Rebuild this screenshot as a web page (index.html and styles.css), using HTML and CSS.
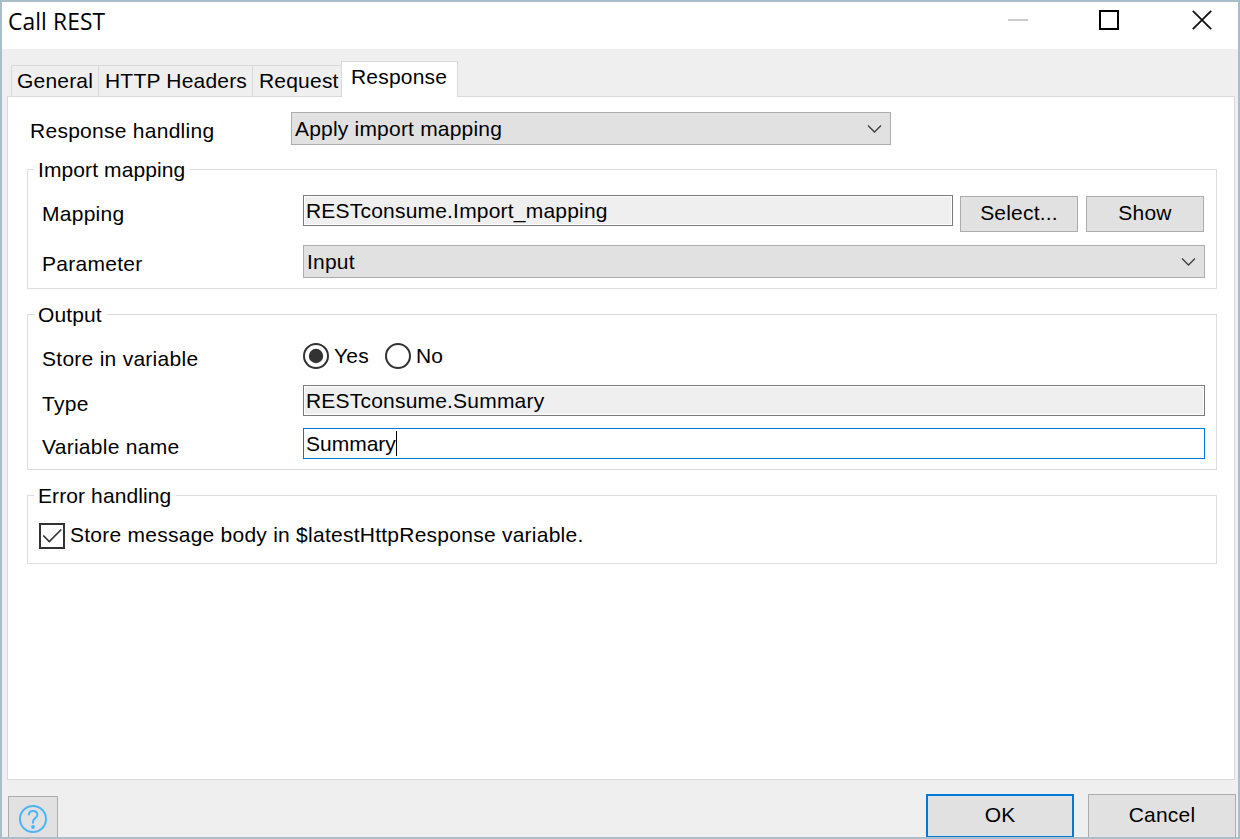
FILE: index.html
```html
<!DOCTYPE html>
<html lang="en">
<head>
<meta charset="utf-8">
<title>Call REST</title>
<link rel="stylesheet" href="styles.css">
</head>
<body>
<div class="window">
  <header class="titlebar">
    <h1 class="title">Call REST</h1>
    <div class="controls">
      <svg class="ctl" width="22" height="22" viewBox="0 0 22 22"><path d="M1 11h20" stroke="#cbcbcb" stroke-width="2"/></svg>
      <svg class="ctl" width="22" height="22" viewBox="0 0 22 22"><rect x="1" y="2" width="18" height="18" fill="none" stroke="#000" stroke-width="2"/></svg>
      <svg class="ctl" width="22" height="22" viewBox="0 0 22 22"><path d="M1.8 1.8L20.2 20.2M20.2 1.8L1.8 20.2" stroke="#111" stroke-width="1.8"/></svg>
    </div>
  </header>

  <nav class="tabs">
    <div class="tab general">General</div>
    <div class="tab headers">HTTP Headers</div>
    <div class="tab request">Request</div>
    <div class="tab active">Response</div>
  </nav>

  <main class="panel">
    <div class="row handling">
      <span class="label">Response handling</span>
      <div class="select short"><span>Apply import mapping</span><svg width="15" height="9" viewBox="0 0 15 9"><path d="M1 1.5l6.5 6.5L14 1.5" fill="none" stroke="#404040" stroke-width="1.4"/></svg></div>
    </div>

    <section class="group import">
      <h2 class="legend">Import mapping</h2>
      <div class="row mapping">
        <span class="label">Mapping</span>
        <div class="input readonly source">RESTconsume.Import_mapping</div>
        <div class="button small">Select...</div>
        <div class="button small">Show</div>
      </div>
      <div class="row parameter">
        <span class="label">Parameter</span>
        <div class="select"><span>Input</span><svg width="15" height="9" viewBox="0 0 15 9"><path d="M1 1.5l6.5 6.5L14 1.5" fill="none" stroke="#404040" stroke-width="1.4"/></svg></div>
      </div>
    </section>

    <section class="group output">
      <h2 class="legend">Output</h2>
      <div class="row store">
        <span class="label">Store in variable</span>
        <div class="radio yes">
          <svg width="26" height="26" viewBox="0 0 26 26"><circle cx="13" cy="13" r="12" fill="#fff" stroke="#333" stroke-width="2"/><circle cx="13" cy="13" r="7.2" fill="#333"/></svg>
          <span>Yes</span>
        </div>
        <div class="radio">
          <svg width="26" height="26" viewBox="0 0 26 26"><circle cx="13" cy="13" r="12" fill="#fff" stroke="#333" stroke-width="2"/></svg>
          <span>No</span>
        </div>
      </div>
      <div class="row type">
        <span class="label">Type</span>
        <div class="input readonly">RESTconsume.Summary</div>
      </div>
      <div class="row variable">
        <span class="label">Variable name</span>
        <div class="input focused">Summary<i class="caret"></i></div>
      </div>
    </section>

    <section class="group errors">
      <h2 class="legend">Error handling</h2>
      <div class="check">
        <svg width="26" height="26" viewBox="0 0 26 26"><rect x="1" y="1" width="24" height="24" fill="#fff" stroke="#333" stroke-width="2"/><path d="M4.3 12.5l6 6L22.3 6.5" fill="none" stroke="#333" stroke-width="1.7"/></svg>
        <span>Store message body in $latestHttpResponse variable.</span>
      </div>
    </section>
  </main>

  <footer class="footer">
    <div class="button help">
      <svg width="30" height="30" viewBox="0 0 30 30" fill="none" stroke="#4db5f5" stroke-width="2"><circle cx="15" cy="15" r="13"/><path d="M10.8 11.2c0-2.8 1.8-4.3 4.3-4.3s4.3 1.6 4.3 3.9c0 3.3-4.4 3.3-4.4 6.6v2.1"/><circle cx="15" cy="23" r="1.9" fill="#4db5f5" stroke="none"/></svg>
    </div>
    <div class="button ok">OK</div>
    <div class="button cancel">Cancel</div>
  </footer>
</div>
</body>
</html>
```
FILE: styles.css
```css
* { box-sizing: border-box; }

body {
  margin: 0;
  font: 21px/24px "Liberation Sans", Arial, sans-serif;
  letter-spacing: 0.2px;
  color: #000;
  white-space: nowrap;
}

h1, h2 { margin: 0; font-weight: normal; }
svg { display: block; flex: none; }

.window {
  display: flex;
  flex-direction: column;
  width: 1240px;
  height: 839px;
  border: 2px solid #a9bec9;
  background: #efefef;
  overflow: hidden;
}

/* Title bar */
.titlebar {
  display: flex;
  justify-content: space-between;
  height: 47px;
  flex: none;
  padding: 7px 25px 0 6px;
  background: #fff;
}
.title {
  font: 22.8px/26px "Open Sans", "Noto Sans", sans-serif;
  letter-spacing: 0.1px;
}
.controls { display: flex; gap: 70px; }

/* Tabs */
.tabs {
  display: flex;
  align-items: flex-end;
  height: 48px;
  flex: none;
  padding-left: 9px;
}
.tab {
  height: 32px;
  padding: 3px 0 0 5px;
  border: 1px solid #d9d9d9;
  border-right: 0;
  border-bottom: 0;
}
.general { width: 87px; }
.headers { width: 154px; padding-left: 6px; }
.request { width: 89px; padding-left: 6px; }
.active {
  z-index: 1;
  width: 117px;
  height: 36px;
  padding-left: 9px;
  border-right: 1px solid #d9d9d9;
  background: #fff;
}

/* Panel and rows */
.panel {
  width: 1228px;
  height: 684px;
  flex: none;
  margin: -1px 0 0 5px;
  padding: 15px 17px 0 19px;
  border: 1px solid #d9d9d9;
  background: #fff;
}
.row { display: flex; align-items: flex-start; }
.label { width: 261px; flex: none; letter-spacing: 0.27px; }
.handling { padding-left: 3px; }
.handling .label { margin-top: 7px; }

.select {
  display: flex;
  justify-content: space-between;
  align-items: center;
  width: 902px;
  height: 33px;
  padding: 0 8px 0 3px;
  border: 1px solid #adadad;
  background: #e1e1e1;
}
.short { width: 600px; }

.input {
  width: 902px;
  height: 31px;
  padding: 3px 0 0 2px;
  border: 1px solid #7a7a7a;
  background: #fff;
}
.readonly { background: #efefef; box-shadow: inset 0 0 0 1px #fff; }
.focused { display: flex; border-color: #0078d7; letter-spacing: 0; }
.caret { width: 1px; height: 25px; margin-top: -1px; background: #000; }
.source { width: 650px; }

.button {
  border: 1px solid #adadad;
  background: #e1e1e1;
  text-align: center;
}
.small { width: 118px; height: 36px; padding-top: 4px; }

/* Groups */
.group {
  padding-left: 14px;
  border: 1px solid #dcdcdc;
}
.legend {
  width: fit-content;
  height: 24px;
  margin: -12px 0 0 -8px;
  padding: 0 5px 0 4px;
  background: #fff;
  font-size: 21px;
  letter-spacing: 0.1px;
}
.import { height: 120px; margin-top: 24px; }
.mapping { height: 50px; margin-top: 13px; }
.mapping .label { margin-top: 7px; }
.mapping .small { margin: 1px 0 0 7px; }
.mapping .small + .small { margin-left: 8px; }
.parameter .label { margin-top: 7px; }

.output { height: 156px; margin-top: 25px; }
.store { height: 42px; margin-top: 16px; }
.store .label { margin-top: 4px; }
.radio { display: flex; gap: 5px; }
.radio span { margin-top: 1px; }
.yes { width: 82px; }
.type { height: 43px; }
.type .label { margin-top: 7px; }
.variable .label { margin-top: 7px; }

.errors { height: 69px; margin-top: 25px; }
.check { display: flex; gap: 5px; margin: 15px 0 0 -3px; letter-spacing: 0.25px; }

/* Footer */
.footer {
  display: flex;
  flex: none;
  align-items: flex-start;
  padding: 14px 0 0 6px;
}
.footer .button { height: 48px; padding-top: 8px; }
.footer .help {
  display: flex;
  justify-content: center;
  width: 50px;
  margin-top: 2px;
  padding-top: 7px;
}
.footer .ok {
  width: 148px;
  height: 44px;
  margin-left: 868px;
  padding-top: 7px;
  border: 2px solid #0078d7;
}
.footer .cancel { width: 148px; margin-left: 14px; }
```
